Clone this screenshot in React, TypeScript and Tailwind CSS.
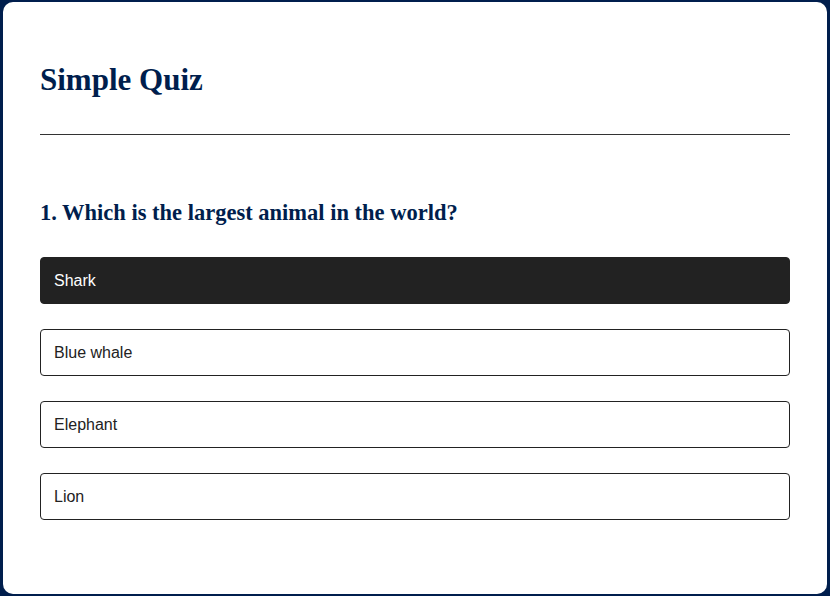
import React, { useState } from 'react'

type Answer = { text: string; correct: boolean }

const QUESTION = 'Which is the largest animal in the world?'

const ANSWERS: Answer[] = [
  { text: 'Shark', correct: false },
  { text: 'Blue whale', correct: true },
  { text: 'Elephant', correct: false },
  { text: 'Lion', correct: false },
]

const serif = "font-['Liberation_Serif','Times_New_Roman',serif]"

export default function App(): JSX.Element {
  const [hovered, setHovered] = useState<number | null>(0)

  return (
    <div className="h-[596px] w-full overflow-hidden bg-[#001e4d] pt-[2px] pb-[2px] pl-[3px] pr-[3px]">
      <div className="flex h-full flex-col rounded-[10px] bg-white px-[37px] pt-[60px]">
        <h1 className={`${serif} text-[31px] font-bold leading-[36px] text-[#001e4d]`}>
          Simple Quiz
        </h1>
        <div className="mt-[36px] h-px bg-[#333]" />

        <h2 className={`${serif} mt-[65px] text-[22.5px] font-bold leading-[26px] text-[#001e4d]`}>
          1. {QUESTION}
        </h2>

        <div className="mt-[31px] flex flex-col gap-[25px]">
          {ANSWERS.map((answer, i) => (
            <button
              key={answer.text}
              type="button"
              onMouseEnter={() => setHovered(i)}
              className={`flex h-[47px] items-center rounded-[4px] border border-[#222] px-[13px] text-left font-['Liberation_Sans',Arial,sans-serif] text-[16px] ${
                hovered === i ? 'bg-[#222] text-white' : 'bg-white text-[#222]'
              }`}
            >
              {answer.text}
            </button>
          ))}
        </div>
      </div>
    </div>
  )
}
